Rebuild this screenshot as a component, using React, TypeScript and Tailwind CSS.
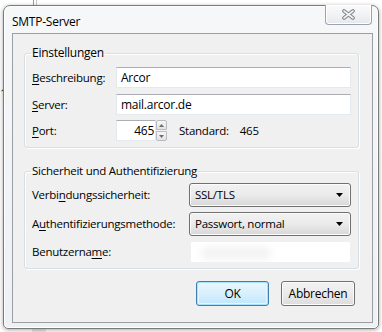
import React from "react";

const font = { fontFamily: '"Segoe UI", "Open Sans", "Noto Sans", sans-serif', letterSpacing: "-0.25px" };

function U({ children }: { children: React.ReactNode }) {
  return <span className="underline underline-offset-2 decoration-1">{children}</span>;
}

function TextBox({ value, className = "" }: { value?: string; className?: string }) {
  return (
    <div
      className={`h-[21px] bg-white border border-[#e3e9ef] border-t-[#abadb3] flex items-center pl-[4px] text-black ${className}`}
    >
      {value}
    </div>
  );
}

function Combo({ value }: { value: string }) {
  return (
    <div className="h-[24px] w-[162px] rounded-[3px] border border-[#707070] bg-gradient-to-b from-[#f2f2f2] via-[#ebebeb] to-[#d7d7d7] flex items-center pl-[5px] pr-[7px] justify-between shadow-[inset_0_0_0_1px_#fcfcfc]">
      <span>{value}</span>
      <svg width="7" height="4" viewBox="0 0 7 4">
        <path d="M0 0H7L3.5 4Z" fill="#000" />
      </svg>
    </div>
  );
}

export default function App() {
  return (
    <div className="w-[382px] h-[332px] bg-white relative overflow-hidden text-[11.5px] text-black" style={font}>
      {/* background bits behind the window */}
      <div className="absolute left-[33px] top-0 w-[1px] h-[6px] bg-[#9a9a9a]" />
      <div className="absolute left-[36px] top-0 w-[1px] h-[6px] bg-[#c8c8c8]" />
      <div className="absolute left-[32px] bottom-0 w-[14px] h-[3px] bg-[#e8e8e8]" />
      <div className="absolute left-[0px] top-[88px] text-[12px] leading-none text-[#333]">1</div>

      {/* window */}
      <div className="absolute left-[3px] top-[5px] w-[376px] h-[324px] rounded-t-[7px] rounded-b-[5px] border border-[#7a7a7a] bg-gradient-to-b from-[#f5f7f9] to-[#eef1f4] shadow-[0_1px_4px_rgba(0,0,0,0.35),inset_0_0_0_1px_#ffffff] flex flex-col">
        {/* title bar */}
        <div className="h-[27px] flex items-start relative shrink-0">
          <span className="ml-[8px] mt-[7px] text-[12px] text-black">SMTP-Server</span>
          <div className="absolute right-[6px] top-[-1px] w-[47px] h-[20px] rounded-b-[4px] border border-t-0 border-[#9aa3ad] bg-gradient-to-b from-[#fbfbfb] to-[#e6e9ec] flex items-center justify-center shadow-[inset_0_0_0_1px_#ffffff]">
            <svg width="13" height="11" viewBox="0 0 13 11">
              <path
                d="M2 2 L11 9 M11 2 L2 9"
                stroke="#7d8287"
                strokeWidth="3.6"
                strokeLinecap="round"
              />
              <path
                d="M2 2 L11 9 M11 2 L2 9"
                stroke="#f4f4f4"
                strokeWidth="1.6"
                strokeLinecap="round"
              />
            </svg>
          </div>
        </div>

        {/* client area */}
        <div className="ml-[8px] mr-[5px] h-[290px] border border-[#9b9fa4] bg-[#f0f0f0] flex flex-col">
          {/* group 1 */}
          <fieldset className="ml-[11px] mr-[15px] mt-[11px] border border-[#d5dfe5] rounded-[3px] px-[7px] pb-[6px] shadow-[inset_1px_1px_0_#ffffff,1px_1px_0_#ffffff]">
            <legend className="px-[1px] ml-[-1px] leading-[16px] text-[12px]">Einstellungen</legend>
            <div className="flex flex-col pt-[6px]">
              <div className="flex items-center h-[21px]">
                <span className="w-[84px]">
                  <U>B</U>eschreibung:
                </span>
                <TextBox value="Arcor" className="w-[235px] text-[12px]" />
              </div>
              <div className="flex items-center h-[21px] mt-[6px]">
                <span className="w-[84px]">
                  <U>S</U>erver:
                </span>
                <TextBox value="mail.arcor.de" className="w-[235px] text-[12px]" />
              </div>
              <div className="flex items-center h-[21px] mt-[5px]">
                <span className="w-[84px]">
                  <U>P</U>ort:
                </span>
                <div className="h-[21px] w-[40px] bg-white border border-[#e3e9ef] border-t-[#abadb3] flex items-center justify-end pr-[1px] text-[12px]">
                  465
                </div>
                <div className="flex flex-col h-[21px] w-[11px] ml-[0px]">
                  <div className="h-[10px] border border-[#b8bcc2] rounded-t-[2px] bg-gradient-to-b from-[#f7f7f7] to-[#e2e2e2] flex items-center justify-center">
                    <svg width="5" height="3" viewBox="0 0 5 3">
                      <path d="M0 3H5L2.5 0Z" fill="#6d6d6d" />
                    </svg>
                  </div>
                  <div className="h-[10px] mt-[1px] border border-[#b8bcc2] rounded-b-[2px] bg-gradient-to-b from-[#f7f7f7] to-[#e2e2e2] flex items-center justify-center">
                    <svg width="5" height="3" viewBox="0 0 5 3">
                      <path d="M0 0H5L2.5 3Z" fill="#6d6d6d" />
                    </svg>
                  </div>
                </div>
                <span className="ml-[12px]">Standard:</span>
                <span className="ml-[11px]">465</span>
              </div>
            </div>
          </fieldset>

          {/* group 2 */}
          <fieldset className="ml-[11px] mr-[15px] mt-[15px] border border-[#d5dfe5] rounded-[3px] px-[7px] pb-[5px] shadow-[inset_1px_1px_0_#ffffff,1px_1px_0_#ffffff]">
            <legend className="px-[1px] ml-[-1px] leading-[16px]">Sicherheit und Authentifizierung</legend>
            <div className="flex flex-col pt-[4px]">
              <div className="flex items-center h-[24px]">
                <span className="w-[157px]">
                  Verbi<U>n</U>dungssicherheit:
                </span>
                <Combo value="SSL/TLS" />
              </div>
              <div className="flex items-center h-[24px] mt-[5px]">
                <span className="w-[157px]">
                  A<U>u</U>thentifizierungsmethode:
                </span>
                <Combo value="Passwort, normal" />
              </div>
              <div className="flex items-center h-[22px] mt-[5px]">
                <span className="w-[158px]">
                  Benutzerna<U>m</U>e:
                </span>
                <div className="h-[22px] w-[161px] bg-white border border-[#eef1f4] relative">
                  <div className="absolute left-[10px] top-[4px] w-[70px] h-[14px] rounded-full bg-[#f4f4f4] blur-[3px]" />
                </div>
              </div>
            </div>
          </fieldset>

          {/* buttons */}
          <div className="flex justify-end mr-[17px] mt-[12px] gap-[12px]">
            <button className="w-[73px] h-[25px] rounded-[3px] border border-[#3c7fb1] bg-gradient-to-b from-[#eaf6fd] via-[#d9f0fc] to-[#bee6fd] shadow-[inset_0_0_0_1px_#a8e1fb,inset_0_0_0_2px_#e6f5fd] text-[12px] text-black" style={font}>
              OK
            </button>
            <button className="w-[74px] h-[25px] rounded-[3px] border border-[#707070] bg-gradient-to-b from-[#f2f2f2] via-[#ebebeb] to-[#dcdcdc] shadow-[inset_0_0_0_1px_#fcfcfc] text-[12px] text-black" style={font}>
              Abbrechen
            </button>
          </div>
        </div>
      </div>
    </div>
  );
}
